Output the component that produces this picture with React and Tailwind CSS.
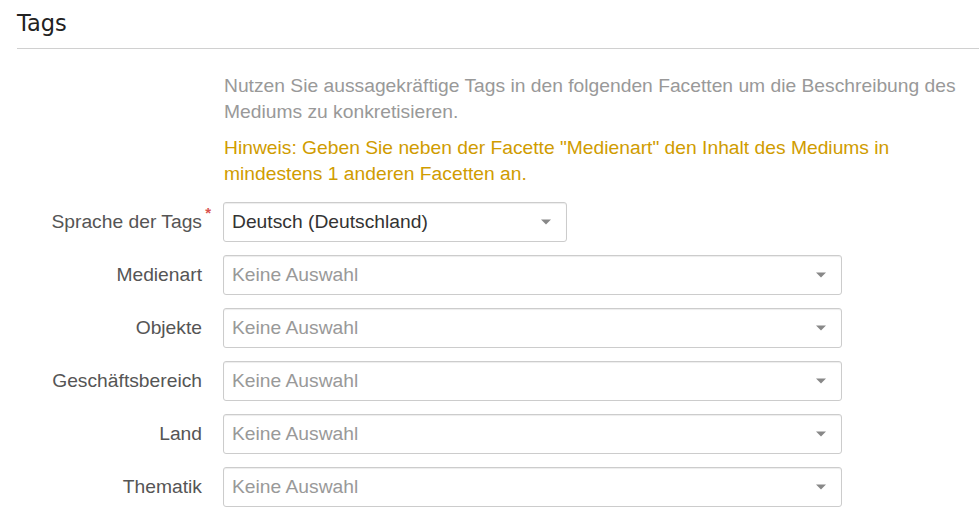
import React from 'react';

const facets = ['Medienart', 'Objekte', 'Geschäftsbereich', 'Land', 'Thematik'];

function Caret() {
  return (
    <span className="absolute right-[15px] top-1/2 -translate-y-1/2 w-0 h-0 border-l-[5px] border-r-[5px] border-t-[5px] border-l-transparent border-r-transparent border-t-[#888]" />
  );
}

function Select({ value, placeholder, wide }) {
  return (
    <div
      className={`relative h-[40px] flex items-center pl-[8px] border border-[#ccc] rounded-[3px] bg-white shadow-[inset_0_1px_1px_rgba(0,0,0,0.075)] ${
        wide ? 'w-[619px]' : 'w-[344px]'
      }`}
    >
      <span className={value ? 'text-[#333]' : 'text-[#999]'}>{value || placeholder}</span>
      <Caret />
    </div>
  );
}

function Row({ label, required, children }) {
  return (
    <div className="flex items-center">
      <div className="w-[185px] text-right text-[#555] relative whitespace-nowrap">
        {label}
        {required && (
          <span className="absolute -right-[9px] -top-[6px] text-[#d9534f] text-[15px] font-bold">*</span>
        )}
      </div>
      <div className="ml-[21px]">{children}</div>
    </div>
  );
}

export default function App() {
  return (
    <div
      className="bg-white w-[979px] h-[529px] overflow-hidden text-[19.25px]"
      style={{ fontFamily: '"Liberation Sans", Arial, sans-serif' }}
    >
      <div className="pl-[17px]">
        <div className="pt-[8px] pb-[10px] border-b border-[#d0d0d0]">
          <h2
            className="text-[22.5px] leading-[30px] text-[#222]"
            style={{ fontFamily: '"DejaVu Sans", Verdana, sans-serif' }}
          >
            Tags
          </h2>
        </div>

        <div className="pl-[207px] pt-[24px]">
          <p className="w-[745px] leading-[26px] text-[#999]">
            Nutzen Sie aussagekräftige Tags in den folgenden Facetten um die Beschreibung des
            Mediums zu konkretisieren.
          </p>
          <p className="mt-[10px] w-[745px] leading-[26px] text-[#d09c00]">
            Hinweis: Geben Sie neben der Facette "Medienart" den Inhalt des Mediums in
            mindestens 1 anderen Facetten an.
          </p>
        </div>

        <div className="mt-[15px] flex flex-col gap-[13px]">
          <Row label="Sprache der Tags" required>
            <Select value="Deutsch (Deutschland)" />
          </Row>
          {facets.map((f) => (
            <Row key={f} label={f}>
              <Select placeholder="Keine Auswahl" wide />
            </Row>
          ))}
        </div>
      </div>
    </div>
  );
}
